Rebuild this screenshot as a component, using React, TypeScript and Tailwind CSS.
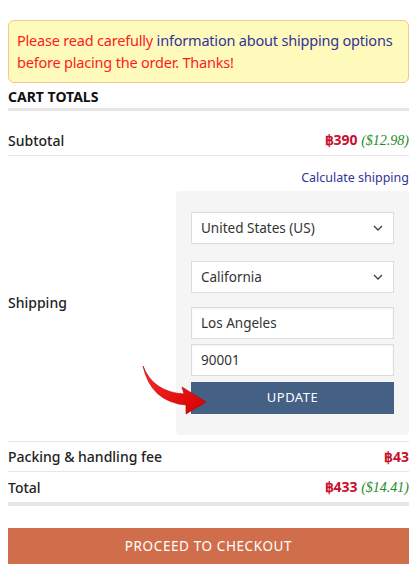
import React from 'react';

const Chevron: React.FC = () => (
  <svg width="12" height="12" viewBox="0 0 12 12" className="text-gray-700">
    <path d="M2 4 L6 8 L10 4" fill="none" stroke="currentColor" strokeWidth="1.3" />
  </svg>
);

const RedArrow: React.FC = () => (
  <svg
    className="absolute left-[140px] top-[360px]"
    width="72"
    height="58"
    viewBox="0 0 72 58"
  >
    <defs>
      <linearGradient id="arr" x1="0" y1="0" x2="1" y2="1">
        <stop offset="0" stopColor="#ff2a2a" />
        <stop offset="1" stopColor="#d40000" />
      </linearGradient>
    </defs>
    <path
      d="M3 6 Q13 32 44 34 L42 27 L66 42 L46 54 L46 45 Q11 42 3 6 Z"
      fill="url(#arr)"
      stroke="#b00000"
      strokeWidth="0.6"
    />
  </svg>
);

const Select: React.FC<{ value: string }> = ({ value }) => (
  <div className="flex items-center justify-between h-[32px] border border-[#dcdcdc] bg-white px-[9px] text-[13.5px] text-[#333]">
    <span>{value}</span>
    <Chevron />
  </div>
);

const Input: React.FC<{ value: string }> = ({ value }) => (
  <div className="flex items-center h-[32px] border border-[#dcdcdc] bg-white px-[9px] text-[13.5px] text-[#333] shadow-[inset_0_1px_2px_rgba(0,0,0,0.06)]">
    {value}
  </div>
);

const App: React.FC = () => {
  return (
    <div className="relative w-[417px] h-[579px] bg-white px-2 pt-5 font-['Noto_Sans',sans-serif] text-[#222]">
      <div className="rounded-md border border-[#f3c88c] bg-[#fefabb] px-2 pt-[8px] pb-[9px] text-[14.5px] leading-[22px] tracking-[-0.2px]">
        <span className="text-[#ff1a1a]">Please read carefully </span>
        <span className="text-[#333399]">information about shipping options</span>
        <span className="text-[#ff1a1a]"> before placing the order. Thanks!</span>
      </div>

      <h2 className="mt-[4px] text-[14px] font-bold leading-[20px] text-[#111]">CART TOTALS</h2>
      <div className="mt-[1px] h-[3px] bg-[#e6e6e6]" />

      <div className="flex items-center justify-between border-b border-[#e6e6e6] pt-[20px] pb-[5px] text-[14px] leading-[18px]">
        <span className="font-medium">Subtotal</span>
        <span>
          <b className="text-[#c8102e]">฿390</b>{' '}
          <i className="font-['Liberation_Serif',serif] text-[#1e8c1e]">($12.98)</i>
        </span>
      </div>

      <div className="flex items-center justify-between pt-[14px] pb-[6px] border-b border-[#e6e6e6]">
        <span className="text-[14px] font-medium">Shipping</span>
        <div className="flex w-[233px] flex-col items-end">
          <span className="text-[12.5px] leading-[16px] text-[#333399]">Calculate shipping</span>
          <div className="mt-[5px] w-full rounded bg-[#f5f5f5] px-[15px] pt-[21px] pb-[21px]">
            <Select value="United States (US)" />
            <div className="mt-[17px]">
              <Select value="California" />
            </div>
            <div className="mt-[14px]">
              <Input value="Los Angeles" />
            </div>
            <div className="mt-[5px]">
              <Input value="90001" />
            </div>
            <button className="mt-[6px] flex h-[32px] w-full items-center justify-center bg-[#456085] text-[13px] tracking-[0.5px] text-white">
              UPDATE
            </button>
          </div>
        </div>
      </div>

      <div className="flex items-center justify-between border-b border-[#e6e6e6] pt-[6px] pb-[5px] text-[14px] leading-[18px]">
        <span className="font-medium">Packing &amp; handling fee</span>
        <b className="text-[#c8102e]">฿43</b>
      </div>

      <div className="flex items-center justify-between pt-[6px] pb-[5px] text-[14px] leading-[18px]">
        <span className="font-medium">Total</span>
        <span>
          <b className="text-[#c8102e]">฿433</b>{' '}
          <i className="font-['Liberation_Serif',serif] text-[#1e8c1e]">($14.41)</i>
        </span>
      </div>
      <div className="h-[4px] bg-[#e6e6e6]" />

      <button className="mt-[22px] flex h-[36px] w-full items-center justify-center bg-[#d06e4b] text-[13.5px] tracking-[0.6px] text-white">
        PROCEED TO CHECKOUT
      </button>

      <RedArrow />
    </div>
  );
};

export default App;
